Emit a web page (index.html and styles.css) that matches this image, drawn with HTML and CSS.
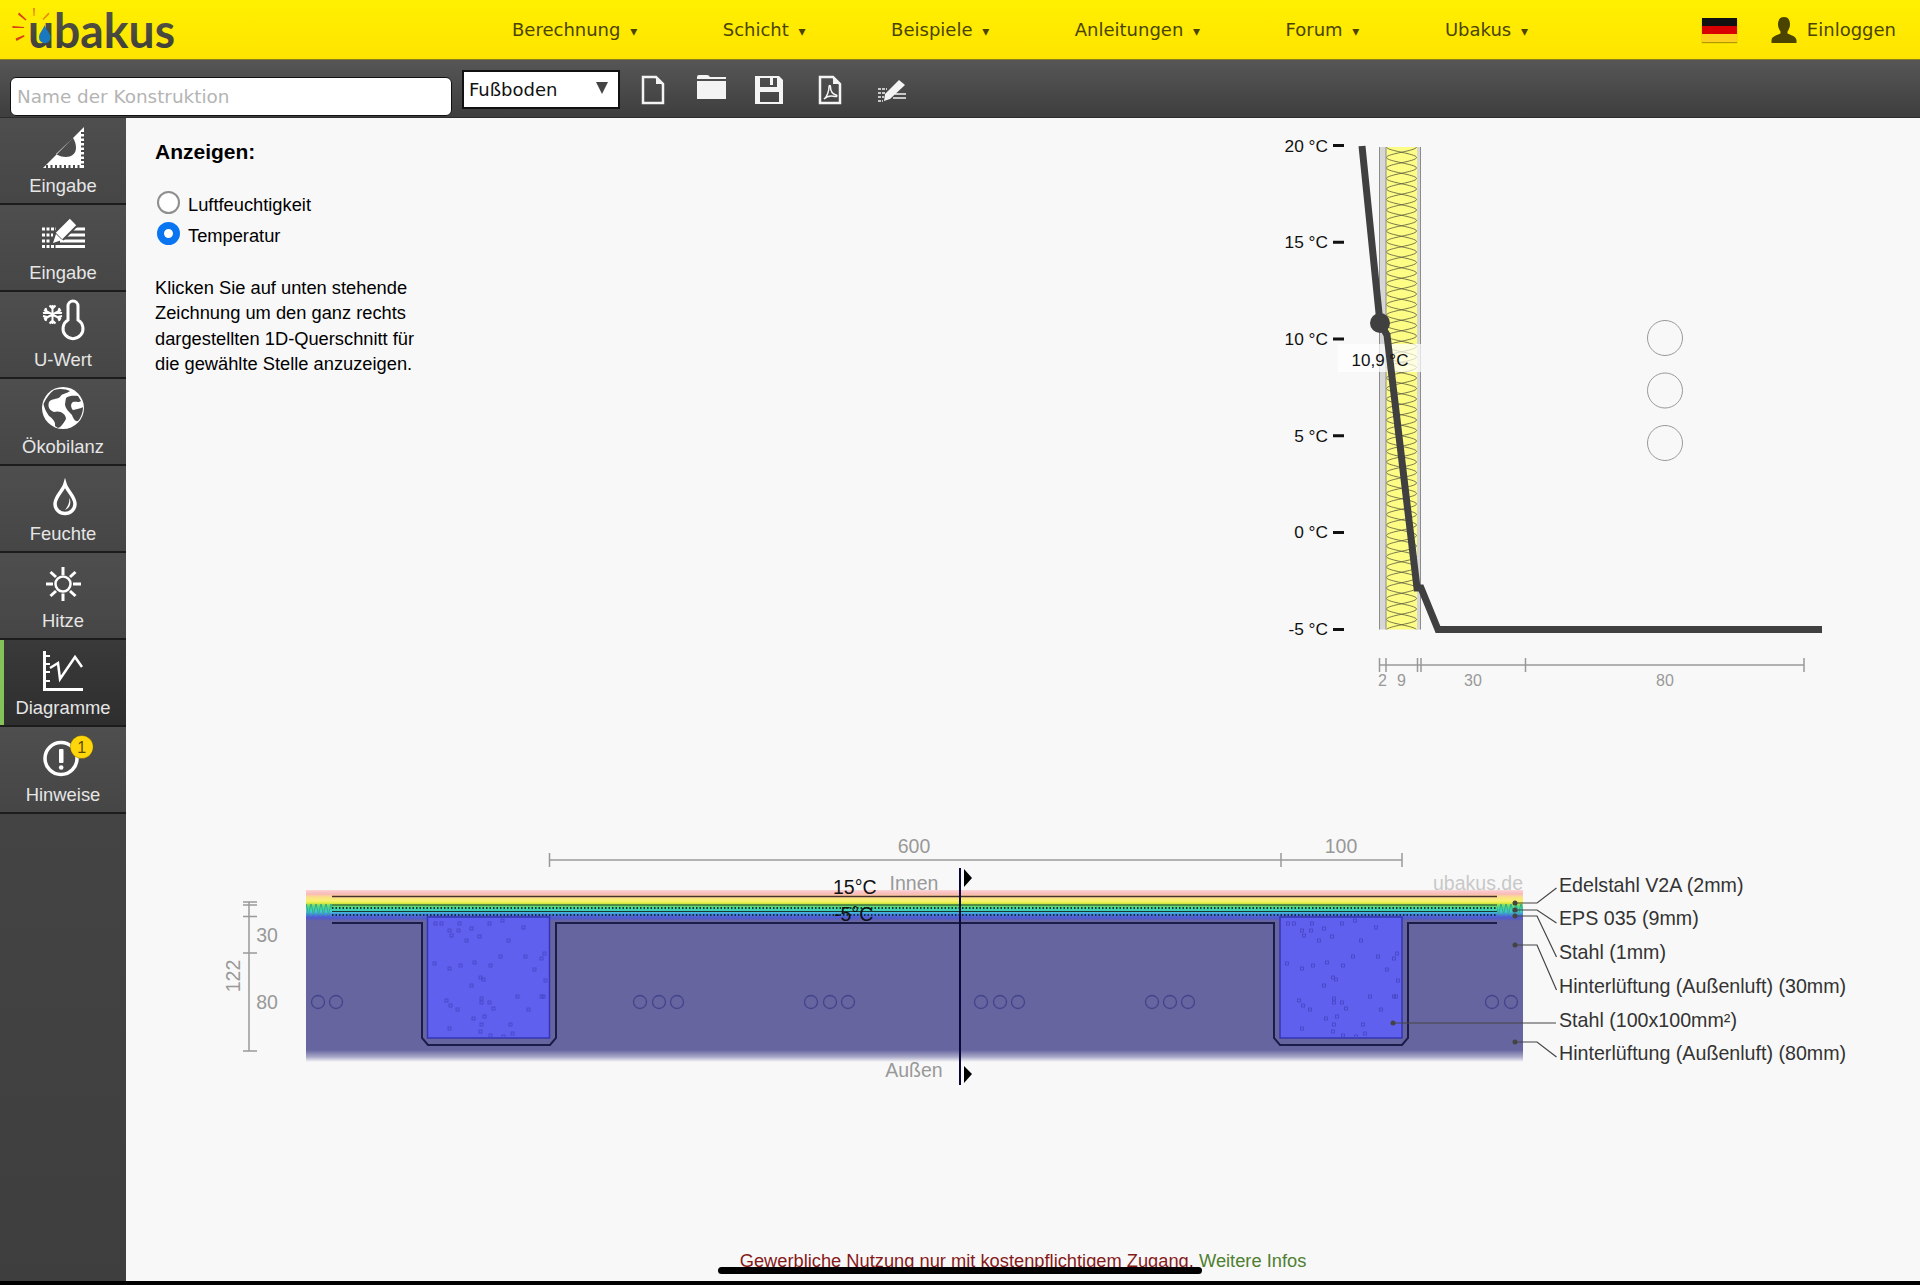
FILE: index.html
```html
<!DOCTYPE html>
<html lang="de">
<head>
<meta charset="utf-8">
<title>ubakus</title>
<link rel="stylesheet" href="styles.css">
</head>
<body>
<header class="topbar">
  <svg class="logo" viewBox="0 0 190 60" width="190" height="60" aria-label="ubakus">
    <defs>
      <linearGradient id="logoText" x1="0" y1="0" x2="0" y2="1"><stop offset="0" stop-color="#5a5a48"/><stop offset="1" stop-color="#3c3c38"/></linearGradient>
    </defs>
    <g class="ray-o"><path d="M33,8 L35,8 L34.500,16 L33.500,16 Z"/><path d="M48.500,12.500 L49.500,14 L43.500,20 L42.500,19 Z"/></g>
    <g class="ray-r"><path d="M19,12.500 L18,14.500 L25.500,20.500 L26.500,19.500 Z"/><path d="M12.500,26 L12.500,28 L24,28 L24,27 Z"/><path d="M15.500,38.500 L16.500,41 L24.500,36.500 L24,35 Z"/></g>
    <text class="logo-text" x="28" y="47.500" textLength="147" lengthAdjust="spacingAndGlyphs">ubakus</text>
    <path class="logo-drop" d="M44.500,25 C43,30 39,33 39,37.500 A5.700,5.700 0 0 0 50.500,37.500 C50.500,33 46,30 44.500,25 Z"/>
  </svg>
  <nav class="nav">
    <a class="nav-item">Berechnung <span class="caret">▾</span></a>
    <a class="nav-item">Schicht <span class="caret">▾</span></a>
    <a class="nav-item">Beispiele <span class="caret">▾</span></a>
    <a class="nav-item">Anleitungen <span class="caret">▾</span></a>
    <a class="nav-item">Forum <span class="caret">▾</span></a>
    <a class="nav-item">Ubakus <span class="caret">▾</span></a>
  </nav>
  <div class="account">
    <span class="flag"><i class="flag-b"></i><i class="flag-r"></i><i class="flag-y"></i></span>
    <svg class="person" viewBox="0 0 26 26" width="26" height="26"><path d="M13,0 C8.500,0 7,3.500 7,7.500 C7,10.500 8.500,13 9.500,14.500 L9.500,16.500 C7,18 1,19 0.500,23 L0.500,26 L25.500,26 L25.500,23 C25,19 19,18 16.500,16.500 L16.500,14.500 C17.500,13 19,10.500 19,7.500 C19,3.500 17.500,0 13,0 Z"/></svg>
    <span class="login">Einloggen</span>
  </div>
</header>

<div class="toolbar">
  <div class="name-input">Name der Konstruktion</div>
  <div class="select"><span>Fußboden</span><i class="select-arrow"></i></div>
  <svg class="tool tool-a" viewBox="0 0 24 30" width="24" height="30"><path class="tool-line" d="M2,2 H15 L22,9 V28 H2 Z"/><path class="tool-fill" d="M15,2 V9 H22 Z"/></svg>
  <svg class="tool tool-b" viewBox="0 0 30 24" width="30" height="24"><path class="tool-fill" d="M0,2 Q0,0 2,0 H10 Q12,0 13,2 H29 V4 H0 Z"/><rect class="tool-fill" x="0" y="6" width="29" height="18"/></svg>
  <svg class="tool tool-c" viewBox="0 0 30 30" width="30" height="30"><path class="tool-fill" fill-rule="evenodd" d="M1,1 H25 L29,5 V29 H1 Z M6,3 V12 H23 V3 H19 V10 H16 V3 Z M6,17 V27 H25 V17 Z"/></svg>
  <svg class="tool tool-d" viewBox="0 0 24 30" width="24" height="30"><path class="tool-line" d="M2,2 H15 L22,9 V28 H2 Z"/><path class="tool-fill" d="M15,2 V9 H22 Z"/><path class="tool-thin" d="M6,24 C9,22 11,16 11,12 C11,10 12.500,10 12.500,12 C12.500,16 15,19 18,20 C19.500,20.500 19,22 17,21.500 C13,20.500 9,21 6,24 Z"/></svg>
  <svg class="tool tool-e" viewBox="0 0 30 24" width="30" height="24"><path class="tool-dash" d="M1,10 H10 M1,14 H9 M1,18 H7 M1,22 H6"/><path class="tool-solid" d="M18,15 H29 M16,19 H29"/><path class="tool-fill" d="M22,1 L28,6 L13,20 L7,22 L8,15 Z"/></svg>
</div>

<div class="workspace">
  <aside class="sidebar">
    <a class="side-item">
      <svg class="side-icon" viewBox="0 118 126 57" width="126" height="57">
        <path class="ic-fill" fill-rule="evenodd" d="M43,168 L84,127 V168 Z M56,154 L73,138 C75,141 76,144 76,148 C76,154 71,157 66,157 C62,157 59,156 56,154 Z"/>
        <path class="ic-notch" d="M46,166.500 H82" stroke-dasharray="2 2.500"/><path class="ic-notch" d="M82.500,132 V165" stroke-dasharray="2 2.500"/>
      </svg>
      <span>Eingabe</span>
    </a>
    <a class="side-item">
      <svg class="side-icon" viewBox="0 205 126 57" width="126" height="57">
        <path class="ic-rows" stroke-dasharray="3 1.500" d="M42,229 H56 M42,235 H53 M42,241 H51 M42,246.500 H56"/>
        <path class="ic-rows" d="M67,229 H85 M64,235 H85 M60,241 H85 M56,246.500 H85"/>
        <path class="ic-pen-bg" d="M59,236 L73,222"/><path class="ic-pen" d="M59,236 L73,222"/>
        <path class="ic-fill" d="M53,243 L56,234 L62,240 Z"/>
      </svg>
      <span>Eingabe</span>
    </a>
    <a class="side-item">
      <svg class="side-icon" viewBox="0 292 126 57" width="126" height="57">
        <path class="ic-snow" d="M52.500,305 V324 M44,310 L61,319 M44,319 L61,310 M49.500,305.500 L52.500,308.500 L55.500,305.500 M49.500,323.500 L52.500,320.500 L55.500,323.500 M43,313 L47,312 L45.500,308 M62,313 L58,312 L59.500,308 M43,316 L47,317 L45.500,321 M62,316 L58,317 L59.500,321"/>
        <path class="ic-thermo" d="M68,320 V306 A5,5 0 0 1 78,306 V320 A10,10 0 1 1 68,320 Z"/>
      </svg>
      <span>U-Wert</span>
    </a>
    <a class="side-item">
      <svg class="side-icon" viewBox="0 379 126 57" width="126" height="57">
        <circle class="ic-fill" cx="63" cy="408" r="21"/>
        <path class="ic-ocean" d="M54,390 C60,388 66,389 70,391 C66,394 62,393 60,397 C56,400 52,398 49,402 C47,408 51,411 54,412 C60,410 66,414 66,419 C63,424 61,427 58,428 L55,426 C56,422 52,418 49,416 C46,412 44,407 43.500,404 C46,398 50,393 54,390 Z"/>
        <path class="ic-ocean" d="M66,398 C70,395 75,396 78,396 L81,401 C78,403 76,401 73,402 C70,404 71,408 73,410 C77,409 82,408 83,407 C83,412 81,418 78,421 C75,422 73,418 72,415 C69,412 65,408 65,404 Z"/>
      </svg>
      <span>Ökobilanz</span>
    </a>
    <a class="side-item">
      <svg class="side-icon" viewBox="0 466 126 57" width="126" height="57">
        <path class="ic-drop" d="M65,484 C63,491 55,496 55,504 A10,9.500 0 0 0 75,504 C75,496 67,491 65,484 Z"/>
        <path class="ic-fill" d="M69.500,498 C71.500,503 70,508 65,510 C68,506 69.500,503 69.500,498 Z"/>
      </svg>
      <span>Feuchte</span>
    </a>
    <a class="side-item">
      <svg class="side-icon" viewBox="0 553 126 57" width="126" height="57">
        <circle class="ic-sun" cx="63" cy="584" r="7.500"/>
        <path class="ic-rays" d="M63,567 V575 M63,593.500 V601 M46,584 H53 M73,584 H81 M50.500,572 L56,577 M70,591 L75.500,596 M50.500,596 L56,591 M70,577 L75.500,572"/>
      </svg>
      <span>Hitze</span>
    </a>
    <a class="side-item is-active">
      <svg class="side-icon" viewBox="0 640 126 57" width="126" height="57">
        <path class="ic-axis" d="M44.500,651 V689.500 H83"/>
        <path class="ic-tick" d="M45,656 H50 M45,664 H50 M45,672 H50 M45,681 H50"/>
        <path class="ic-zig" d="M50,668 L58,663 L60,679 L75,657 L82,667"/>
      </svg>
      <span>Diagramme</span>
    </a>
    <a class="side-item">
      <svg class="side-icon" viewBox="0 727 126 57" width="126" height="57">
        <circle class="ic-ring" cx="61" cy="758.500" r="16"/>
        <rect class="ic-fill" x="59" y="749" width="4.500" height="14" rx="1"/>
        <circle class="ic-fill" cx="61.200" cy="767.500" r="2.300"/>
        <circle class="ic-badge" cx="81.700" cy="747" r="11.500"/>
        <text class="ic-badge-text" x="81.700" y="752.500">1</text>
      </svg>
      <span>Hinweise</span>
    </a>
  </aside>

  <main class="main">
    <div class="upper">
      <section class="panel">
        <h2 class="panel-title">Anzeigen:</h2>
        <div class="radio-row"><i class="radio"></i><span>Luftfeuchtigkeit</span></div>
        <div class="radio-row"><i class="radio is-on"></i><span>Temperatur</span></div>
        <p class="panel-text">Klicken Sie auf unten stehende Zeichnung um den ganz rechts dargestellten 1D-Querschnitt für die gewählte Stelle anzuzeigen.</p>
      </section>
      <svg class="chart" viewBox="1260 130 620 570" width="620" height="570">
        <defs>
          <pattern id="eps" x="1386" y="147" width="31" height="21" patternUnits="userSpaceOnUse">
            <rect class="eps-bg" width="31" height="21"/>
            <path class="eps-line" d="M0.500,0 C0.500,4 30.500,6.500 30.500,10.500 C30.500,14.500 0.500,17 0.500,21 M30.500,0 C30.500,4 0.500,6.500 0.500,10.500 C0.500,14.500 30.500,17 30.500,21"/>
          </pattern>
        </defs>
        <rect class="wall-steel" x="1379" y="147" width="7" height="482.500"/>
        <rect class="wall-eps" x="1386" y="147" width="31" height="482.500"/>
        <rect class="wall-steel" x="1417" y="147" width="4" height="482.500"/>
        <path class="wall-edge" d="M1379.500,147 V629.500 M1420.500,147 V629.500 M1386,147 V629.500"/>
        <rect class="tooltip-bg" x="1338" y="344" width="83" height="28"/>
        <path class="temp-line" d="M1362,146 L1380,323 L1387,335 L1417,588 L1421,588 L1438,629.500 L1822,629.500"/>
        <circle class="temp-dot" cx="1380" cy="323" r="10"/>
        <text class="tip-text" x="1380" y="366">10,9 °C</text>
        <text class="axis-text" x="1328" y="151.500">20 °C</text>
        <text class="axis-text" x="1328" y="248">15 °C</text>
        <text class="axis-text" x="1328" y="344.500">10 °C</text>
        <text class="axis-text" x="1328" y="441.500">5 °C</text>
        <text class="axis-text" x="1328" y="537.500">0 °C</text>
        <text class="axis-text" x="1328" y="634.500">-5 °C</text>
        <path class="axis-tick" d="M1333,145.500 H1344 M1333,242.300 H1344 M1333,339 H1344 M1333,435.800 H1344 M1333,532.500 H1344 M1333,629.500 H1344"/>
        <circle class="probe" cx="1665" cy="338" r="17.500"/>
        <circle class="probe" cx="1665" cy="390.500" r="17.500"/>
        <circle class="probe" cx="1665" cy="443" r="17.500"/>
        <path class="dim" d="M1379.500,665 H1804 M1379.500,658 V672 M1386,658 V672 M1417.500,658 V672 M1421,658 V672 M1525.500,658 V672 M1804,658 V672"/>
        <text class="dim-text" x="1382.500" y="686">2</text>
        <text class="dim-text" x="1401.500" y="686">9</text>
        <text class="dim-text" x="1473" y="686">30</text>
        <text class="dim-text" x="1665" y="686">80</text>
      </svg>
    </div>

    <svg class="section" viewBox="220 830 1640 260" width="1640" height="260">
      <defs>
        <linearGradient id="heat" gradientUnits="userSpaceOnUse" x1="0" y1="890" x2="0" y2="1062">
          <stop offset="0" stop-color="#fbd4d4"/>
          <stop offset="0.023" stop-color="#f9baba"/>
          <stop offset="0.041" stop-color="#fbe08a"/>
          <stop offset="0.064" stop-color="#f8f270"/>
          <stop offset="0.076" stop-color="#e6ec40"/>
          <stop offset="0.087" stop-color="#7edc58"/>
          <stop offset="0.105" stop-color="#40dc98"/>
          <stop offset="0.128" stop-color="#40c4d8"/>
          <stop offset="0.146" stop-color="#4a70e0"/>
          <stop offset="0.163" stop-color="#5258cc"/>
          <stop offset="0.18" stop-color="#66659f"/>
          <stop offset="0.93" stop-color="#66659f"/>
          <stop offset="0.97" stop-color="#a8a8c8"/>
          <stop offset="1" stop-color="#f8f8f8"/>
        </linearGradient>
        <g id="speckle">
          <rect x="434" y="922" width="3" height="3"/><rect x="440" y="922" width="3" height="3"/><rect x="458" y="922" width="3" height="3"/><rect x="488" y="922" width="3" height="3"/><rect x="501" y="919" width="3" height="3"/><rect x="522" y="926" width="3" height="3"/><rect x="448" y="929" width="3" height="3"/><rect x="457" y="929" width="3" height="3"/><rect x="470" y="927" width="3" height="3"/><rect x="450" y="934" width="3" height="3"/><rect x="478" y="935" width="3" height="3"/><rect x="465" y="939" width="3" height="3"/><rect x="507" y="939" width="3" height="3"/><rect x="499" y="955" width="3" height="3"/><rect x="524" y="955" width="3" height="3"/><rect x="543" y="952" width="3" height="3"/><rect x="540" y="957" width="3" height="3"/><rect x="533" y="968" width="3" height="3"/><rect x="433" y="962" width="3" height="3"/><rect x="448" y="967" width="3" height="3"/><rect x="459" y="964" width="3" height="3"/><rect x="473" y="961" width="3" height="3"/><rect x="489" y="964" width="3" height="3"/><rect x="479" y="976" width="3" height="3"/><rect x="482" y="978" width="3" height="3"/><rect x="544" y="979" width="3" height="3"/><rect x="470" y="984" width="3" height="3"/><rect x="516" y="995" width="3" height="3"/><rect x="540" y="995" width="3" height="3"/><rect x="542" y="995" width="3" height="3"/><rect x="445" y="999" width="3" height="3"/><rect x="480" y="997" width="3" height="3"/><rect x="480" y="1001" width="3" height="3"/><rect x="488" y="1001" width="3" height="3"/><rect x="449" y="1004" width="3" height="3"/><rect x="456" y="1008" width="3" height="3"/><rect x="492" y="1007" width="3" height="3"/><rect x="527" y="1008" width="3" height="3"/><rect x="472" y="1017" width="3" height="3"/><rect x="483" y="1015" width="3" height="3"/><rect x="480" y="1023" width="3" height="3"/><rect x="509" y="1023" width="3" height="3"/><rect x="448" y="1027" width="3" height="3"/><rect x="479" y="1030" width="3" height="3"/><rect x="511" y="1032" width="3" height="3"/><rect x="489" y="1034" width="3" height="3"/><rect x="502" y="1035" width="3" height="3"/>
        </g>
        <pattern id="zig" x="306" y="903" width="5" height="12" patternUnits="userSpaceOnUse">
          <path class="zig-line" d="M0,0 L2.500,12 L5,0"/>
        </pattern>
      </defs>

      <rect x="306" y="890" width="1217" height="172" fill="url(#heat)"/>
      <rect x="306" y="904" width="26" height="12" fill="url(#zig)"/>
      <rect x="1497" y="904" width="26" height="12" fill="url(#zig)"/>

      <rect class="steel-fill" x="427.500" y="917" width="122" height="121"/>
      <rect class="steel-fill" x="1280" y="917" width="122" height="121"/>
      <use href="#speckle" class="speck"/>
      <use href="#speckle" class="speck" x="852.500"/>

      <path class="mat-line" d="M332,896.500 H1497"/>
      <path class="mat-dark" d="M332,905 H1497 M332,911.500 H1497"/>
      <path class="mat-dots" d="M332,908 H1497 M332,915 H1497"/>
      <path class="profile" d="M332,923 H422 V1038 L428,1045 H550 L556,1038 V923 H1274 V1038 L1280,1045 H1402 L1408,1038 V923 H1497"/>

      <g class="tube"><circle cx="318" cy="1002" r="6.500"/><circle cx="336" cy="1002" r="6.500"/><circle cx="640" cy="1002" r="6.500"/><circle cx="659" cy="1002" r="6.500"/><circle cx="677" cy="1002" r="6.500"/><circle cx="811" cy="1002" r="6.500"/><circle cx="830" cy="1002" r="6.500"/><circle cx="848" cy="1002" r="6.500"/><circle cx="981" cy="1002" r="6.500"/><circle cx="1000" cy="1002" r="6.500"/><circle cx="1018" cy="1002" r="6.500"/><circle cx="1152" cy="1002" r="6.500"/><circle cx="1170" cy="1002" r="6.500"/><circle cx="1188" cy="1002" r="6.500"/><circle cx="1492" cy="1002" r="6.500"/><circle cx="1511" cy="1002" r="6.500"/></g>

      <path class="dim" d="M549.500,860 H1402 M549.500,853 V867 M1281,853 V867 M1402,853 V867"/>
      <text class="sec-dim" x="914" y="853">600</text>
      <text class="sec-dim" x="1341" y="853">100</text>
      <path class="dim" d="M249,902 V1051 M243,902 H257 M243,905 H257 M243,916.500 H257 M243,953 H257 M243,1051 H257"/>
      <text class="sec-dim" x="267" y="942">30</text>
      <text class="sec-dim" x="267" y="1009">80</text>
      <text class="sec-dim" transform="translate(240 976) rotate(-90)">122</text>

      <text class="sec-temp" x="833" y="894">15°C</text>
      <text class="sec-temp" x="834" y="921">-5°C</text>
      <text class="sec-dim" x="914" y="890">Innen</text>
      <text class="sec-dim" x="914" y="1077">Außen</text>
      <text class="watermark" x="1523" y="890">ubakus.de</text>

      <path class="cut" d="M960,868 V1085"/>
      <path class="cut-arrow" d="M964,869 V887 L972,878 Z M964,1066 V1083 L972,1074 Z"/>

      <g class="leader-dots"><circle cx="1515" cy="903" r="2.500"/><circle cx="1515" cy="910" r="2.500"/><circle cx="1515" cy="916" r="2.500"/><circle cx="1515" cy="945" r="2.500"/><circle cx="1393" cy="1023" r="2.500"/><circle cx="1515" cy="1042" r="2.500"/></g>
      <path class="leader" d="M1515,903 H1537 L1556.500,888 M1515,910 H1537 L1556.500,923 M1515,916 H1537 L1556.500,957 M1515,945 H1537 L1556.500,990 M1393,1023 H1556 M1515,1042 H1537 L1556.500,1057"/>

      <text class="sec-label" x="1559" y="892">Edelstahl V2A (2mm)</text>
      <text class="sec-label" x="1559" y="925">EPS 035 (9mm)</text>
      <text class="sec-label" x="1559" y="959">Stahl (1mm)</text>
      <text class="sec-label" x="1559" y="993">Hinterlüftung (Außenluft) (30mm)</text>
      <text class="sec-label" x="1559" y="1027">Stahl (100x100mm²)</text>
      <text class="sec-label" x="1559" y="1060">Hinterlüftung (Außenluft) (80mm)</text>
    </svg>

    <footer class="footer"><span class="foot-warn">Gewerbliche Nutzung nur mit kostenpflichtigem Zugang.</span> <a class="foot-link">Weitere Infos</a></footer>
  </main>
</div>
<div class="bottom-bar"></div>
<div class="home-indicator"></div>
</body>
</html>
```
FILE: styles.css
```css
* { box-sizing: border-box; }
html, body { margin: 0; height: 1285px; overflow: hidden; }
body {
  display: flex;
  flex-direction: column;
  position: relative;
  font-family: "Liberation Sans", Arial, sans-serif;
  background: #f8f8f8;
  color: #000;
}

/* header */
.topbar {
  height: 60px;
  flex: none;
  display: flex;
  align-items: center;
  background: linear-gradient(#fff000, #ffe400);
  border-bottom: 1px solid #8a7d20;
}
.logo { flex: none; display: block; }
.ray-o { fill: #e8890c; }
.ray-r { fill: #d8401a; }
.logo-text { font-family: Lato, sans-serif; font-weight: 700; font-size: 48px; fill: url(#logoText); }
.logo-drop { fill: #1a78c0; }
.nav { display: flex; gap: 85.500px; margin-left: 322px; }
.nav-item, .login {
  font-family: "DejaVu Sans", sans-serif;
  font-size: 18px;
  color: #4a4400;
}
.caret { font-size: 14px; margin-left: 4px; }
.account { margin-left: auto; display: flex; align-items: center; padding-right: 24px; }
.flag {
  width: 35px;
  height: 24px;
  display: flex;
  flex-direction: column;
  box-shadow: 0 1px 1px rgba(120, 100, 0, 0.6);
  margin-right: 34px;
}
.flag i { flex: 1; }
.flag-b { background: #111; }
.flag-r { background: #d80000; }
.flag-y { background: #ffcf20; }
.person { fill: #4a4400; margin-right: 10px; }

/* toolbar */
.toolbar {
  height: 58px;
  flex: none;
  display: flex;
  align-items: flex-start;
  background: linear-gradient(#565656, #3e3e3e);
  border-bottom: 1px solid #2c2c2c;
}
.name-input {
  width: 442px;
  height: 39px;
  margin: 17px 0 0 10px;
  padding-left: 6px;
  background: #fff;
  border: 1.500px solid #111;
  border-radius: 6px;
  font-family: "DejaVu Sans", sans-serif;
  font-size: 18.400px;
  line-height: 38px;
  color: #b4b4b4;
  white-space: nowrap;
}
.select {
  width: 158px;
  height: 39px;
  margin: 10px 0 0 10px;
  padding: 0 5px;
  display: flex;
  align-items: center;
  justify-content: space-between;
  background: #fff;
  border: 2px solid #111;
  font-family: "DejaVu Sans", sans-serif;
  font-size: 18px;
  color: #111;
}
.select-arrow {
  width: 0;
  height: 0;
  margin-right: 5px;
  margin-top: -4px;
  border-left: 6px solid transparent;
  border-right: 6px solid transparent;
  border-top: 12px solid #444;
}
.tool { flex: none; margin-top: 15px; display: block; }
.tool-a { margin-left: 21px; }
.tool-b { margin-left: 32px; margin-top: 15px; }
.tool-c { margin-left: 27px; }
.tool-d { margin-left: 34px; }
.tool-e { margin-left: 35px; margin-top: 19px; }
.tool-fill { fill: #f4f4f4; }
.tool-line { fill: none; stroke: #f4f4f4; stroke-width: 2.5; }
.tool-thin { fill: none; stroke: #f4f4f4; stroke-width: 1.5; }
.tool-dash { fill: none; stroke: #f4f4f4; stroke-width: 1.5; stroke-dasharray: 3 1; }
.tool-solid { fill: none; stroke: #f4f4f4; stroke-width: 1.5; }

/* workspace */
.workspace { flex: 1; min-height: 0; display: flex; }
.sidebar {
  width: 126px;
  flex: none;
  background: linear-gradient(#4c4c4c, #3e3e3e);
}
.side-item {
  height: 87px;
  display: flex;
  flex-direction: column;
  align-items: center;
  background: linear-gradient(#4e4e4e, #464646);
  border-bottom: 2px solid #1c1c1c;
  color: #e6e6e6;
  font-size: 18.400px;
  line-height: 22px;
}
.side-item.is-active {
  background: linear-gradient(#3a3a3a, #2e2e2e);
  box-shadow: inset 4px 0 0 #84c35a;
}
.side-icon { flex: none; display: block; }
.ic-fill { fill: #fff; }
.ic-notch { fill: none; stroke: #4a4a4a; stroke-width: 3; }
.ic-rows { fill: none; stroke: #fff; stroke-width: 3; }
.ic-pen-bg { fill: none; stroke: #4a4a4a; stroke-width: 13; }
.ic-pen { fill: none; stroke: #fff; stroke-width: 9; }
.ic-snow { fill: none; stroke: #fff; stroke-width: 2; }
.ic-thermo { fill: none; stroke: #fff; stroke-width: 3; }
.ic-ocean { fill: #4a4a4a; }
.ic-drop { fill: none; stroke: #fff; stroke-width: 3.5; }
.ic-ring { fill: none; stroke: #fff; stroke-width: 3.5; }
.ic-sun { fill: none; stroke: #fff; stroke-width: 2.5; }
.ic-rays { fill: none; stroke: #fff; stroke-width: 3; }
.ic-axis { fill: none; stroke: #fff; stroke-width: 3; }
.ic-tick { fill: none; stroke: #fff; stroke-width: 2; }
.ic-zig { fill: none; stroke: #fff; stroke-width: 2.5; }
.ic-badge { fill: #ffd60a; stroke: rgba(0, 0, 0, 0.25); stroke-width: 1; }
.ic-badge-text { font-size: 16px; fill: #5a4a00; text-anchor: middle; }

/* main */
.main { flex: 1; min-width: 0; display: flex; flex-direction: column; }
.upper { display: flex; justify-content: space-between; }
.panel { width: 290px; padding: 22px 0 0 29px; font-size: 18.300px; }
.panel-title { margin: 0 0 25px; font-size: 21px; line-height: 24px; font-weight: 700; }
.radio-row { display: flex; align-items: center; height: 31px; gap: 8.500px; }
.radio {
  width: 23px;
  height: 23px;
  border-radius: 50%;
  background: #fff;
  border: 2px solid #8e8e8e;
  flex: none;
  margin: 0 0 4px 1.500px;
}
.radio.is-on { background: #fff; border: 7px solid #0a75f0; }
.panel-text { margin: 23.500px 0 0; line-height: 25.500px; }
.chart { flex: none; display: block; margin: 12px 40px 0 0; }
.wall-steel { fill: #d6d6d6; }
.wall-eps { fill: url(#eps); }
.eps-bg { fill: #fdfc84; }
.eps-line { fill: none; stroke: #55553c; stroke-width: 0.8; }
.wall-edge { fill: none; stroke: #8c8c8c; stroke-width: 1; }
.tooltip-bg { fill: #fff; fill-opacity: 0.72; }
.temp-line { fill: none; stroke: #404040; stroke-width: 7; }
.temp-dot { fill: #404040; }
.tip-text { font-size: 17px; text-anchor: middle; fill: #111; }
.axis-text { font-size: 17.300px; text-anchor: end; fill: #111; }
.axis-tick { fill: none; stroke: #111; stroke-width: 3; }
.probe { fill: none; stroke: #9a9a9a; stroke-width: 1; }
.dim { fill: none; stroke: #999; stroke-width: 1.5; }
.dim-text { font-size: 16px; text-anchor: middle; fill: #999; }

.section { flex: none; display: block; margin: 130px 0 0 94px; }
.sec-dim { font-size: 19.500px; text-anchor: middle; fill: #999; }
.sec-temp { font-size: 19.500px; fill: #111; }
.sec-label { font-size: 19.650px; fill: #333; }
.watermark { font-size: 19.500px; text-anchor: end; fill: #c8c8c8; }
.steel-fill { fill: #6060ee; stroke: #3434b4; stroke-width: 1.5; }
.speck { fill: none; stroke: #4444c4; stroke-width: 0.8; }
.zig-line { fill: none; stroke: #35a890; stroke-width: 1; }
.mat-line { fill: none; stroke: #4a3030; stroke-width: 1.5; }
.mat-dark { fill: none; stroke: #1a3a30; stroke-width: 1; }
.mat-dots { fill: none; stroke: #12303a; stroke-width: 2; stroke-dasharray: 1.500 2; }
.profile { fill: none; stroke: #1c1c48; stroke-width: 2; }
.tube { fill: none; stroke: #42448c; stroke-width: 1.3; }
.cut { fill: none; stroke: #0a0a3a; stroke-width: 2; }
.cut-arrow { fill: #000; }
.leader { fill: none; stroke: #444; stroke-width: 1.2; }
.leader-dots { fill: #444; }

.footer {
  margin-top: auto;
  height: 22px;
  margin-bottom: 9px;
  text-align: center;
  font-size: 18.300px;
  line-height: 22px;
}
.foot-warn { color: #861a1a; }
.foot-link { color: #4f7f30; }

.bottom-bar { height: 4px; flex: none; background: #000; }
.home-indicator {
  position: absolute;
  left: 718px;
  top: 1267px;
  width: 484px;
  height: 7px;
  border-radius: 4px;
  background: #000;
}
```
